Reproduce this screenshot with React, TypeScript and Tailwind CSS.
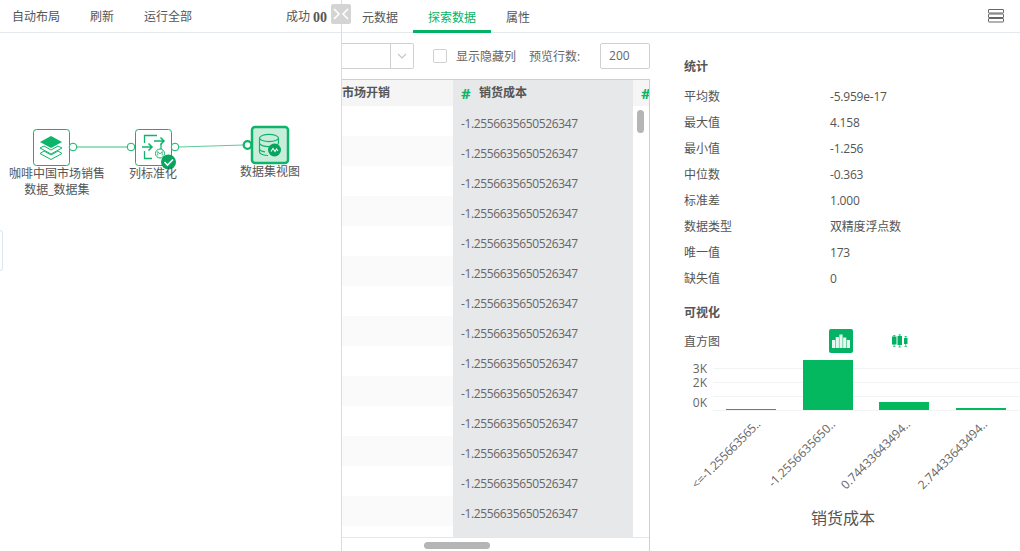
const font = { fontFamily: '"Open Sans", "Noto Sans CJK SC", sans-serif' };

const stats = [
  ["平均数", "-5.959e-17"],
  ["最大值", "4.158"],
  ["最小值", "-1.256"],
  ["中位数", "-0.363"],
  ["标准差", "1.000"],
  ["数据类型", "双精度浮点数"],
  ["唯一值", "173"],
  ["缺失值", "0"],
];

const rows = Array.from({ length: 14 }, (_, i) => i);

function Canvas() {
  return (
    <div className="relative flex-1">
      <svg className="absolute left-0 top-0" width="340" height="300" viewBox="0 33 340 300" fill="none">
        <path d="M77 147H127" stroke="#7bd6a9" strokeWidth="1.5" />
        <path d="M179 147L243 145" stroke="#5ecb96" strokeWidth="1.2" />

        <rect x="33.5" y="129.5" width="36" height="36" rx="3" fill="#fff" stroke="#0cb56a" />
        <path d="M51 136L62 142L51 148L40 142Z" fill="#0cb56a" />
        <path d="M44 146L40 148L51 154L62 148L58 146L51 150Z" fill="#fff" stroke="#0cb56a" strokeWidth="1" />
        <path d="M44 151L40 153.5L51 159.5L62 153.5L58 151L51 155Z" fill="#fff" stroke="#0cb56a" strokeWidth="1" />
        <circle cx="73" cy="147" r="3.8" fill="#fff" stroke="#0cb56a" />

        <circle cx="131" cy="147" r="3.8" fill="#fff" stroke="#0cb56a" />
        <rect x="135.5" y="129.5" width="36" height="36" rx="3" fill="#fff" stroke="#0cb56a" />
        <path d="M157 135.5H144.5V143M144.5 151V158.5H152" stroke="#0cb56a" strokeWidth="1.3" />
        <path d="M142 147H152M148.5 143.5L152 147L148.5 150.5" stroke="#0cb56a" strokeWidth="1.5" />
        <path d="M154 141H164M160.5 137.5L164 141L160.5 144.5" stroke="#0cb56a" strokeWidth="1.5" />
        <path d="M161 144V150" stroke="#0cb56a" strokeWidth="1.3" />
        <circle cx="160" cy="153.5" r="4.5" fill="#fff" stroke="#0cb56a" />
        <path d="M157.8 155.5V151.5L160 154L162.2 151.5V155.5" stroke="#0cb56a" strokeWidth="0.8" />
        <circle cx="175" cy="147" r="3.8" fill="#fff" stroke="#0cb56a" />
        <circle cx="168.5" cy="162" r="7.5" fill="#08a55f" />
        <path d="M164.5 162L167.5 165L173 159.5" stroke="#fff" strokeWidth="1.6" />

        <rect x="252" y="127" width="36" height="36" rx="3" fill="#c9eddb" stroke="#0cb56a" strokeWidth="2.5" />
        <ellipse cx="269" cy="138" rx="9.5" ry="3.6" stroke="#0cb56a" strokeWidth="1.2" />
        <path d="M259.5 138V152C259.5 154 264 155.5 268 155.5M259.5 143C259.5 145 264 146.7 269 146.7C274 146.7 278.5 145 278.5 143M259.5 148.5C259.5 150 262 151.5 265 151.8M278.5 138V143" stroke="#0cb56a" strokeWidth="1.2" />
        <circle cx="274.5" cy="150" r="6.5" fill="#08a55f" />
        <path d="M271 151.5L273 148.5L275 151.5L276.5 149L278 151" stroke="#fff" strokeWidth="1.1" />
        <circle cx="247.5" cy="145" r="3.8" fill="#fff" stroke="#0cb56a" strokeWidth="2.2" />
      </svg>

      <div className="absolute left-[7px] top-[133px] w-[100px] text-center text-[12px] leading-[16px] text-[#555]">
        咖啡中国市场销售
        <br />
        数据_数据集
      </div>
      <div className="absolute left-[123px] top-[133px] w-[60px] text-center text-[12px] leading-[16px] text-[#555]">
        列标准化
      </div>
      <div className="absolute left-[235px] top-[131px] w-[70px] text-center text-[12px] leading-[16px] text-[#555]">
        数据集视图
      </div>
      <div className="absolute left-0 top-[197px] h-[41px] w-[3px] rounded-r-[3px] border border-l-0 border-[#dfe6ec]" />
    </div>
  );
}

function LeftPane() {
  return (
    <div className="flex w-[342px] shrink-0 flex-col border-r border-[#dcdcdc]">
      <div className="flex h-[33px] items-center border-b border-[#e4e9ee] pl-3 pt-[2px] text-[12px] text-[#555]">
        <span>自动布局</span>
        <span className="ml-[30px]">刷新</span>
        <span className="ml-[30px]">运行全部</span>
        <span className="ml-[94px]">成功</span>
        <span className="ml-[3px] font-['Liberation_Serif',serif] text-[14px] font-bold">00</span>
      </div>
      <Canvas />
    </div>
  );
}

function Toolbar() {
  return (
    <div className="flex h-[46px] items-start pt-[10px] text-[12px] text-[#666]">
      <div className="flex h-[26px] w-[72px] rounded-r-[2px] border border-l-0 border-[#d0d0d0]">
        <div className="w-[49px] border-r border-[#d0d0d0]" />
        <div className="flex flex-1 items-center justify-center">
          <svg width="10" height="6" viewBox="0 0 10 6" fill="none">
            <path d="M1 1L5 5L9 1" stroke="#c4c4c4" strokeWidth="1.1" />
          </svg>
        </div>
      </div>
      <div className="ml-[19px] mt-[6px] h-[14px] w-[14px] rounded-[2px] border border-[#d0d0d0]" />
      <span className="ml-[9px] mt-[5px] leading-[18px]">显示隐藏列</span>
      <span className="ml-[13px] mt-[5px] w-[54px] leading-[18px]">预览行数:</span>
      <div className="ml-[17px] flex h-[26px] w-[50px] items-center rounded-[2px] border border-[#d0d0d0] pl-[8px]">
        200
      </div>
    </div>
  );
}

function DataTable() {
  return (
    <div className="flex h-[472px] flex-col border-r border-[#cfcfcf]">
      <div className="flex h-[458px] overflow-hidden border-t border-[#cfcfcf]">
        <div className="w-[111px] shrink-0">
          <div className="flex h-[26px] items-center bg-[#f5f5f5] text-[12px] font-bold text-[#555]">市场开销</div>
          {rows.map((i) => (
            <div key={i} className={i % 2 === 1 ? "h-[30px] bg-[#fafafa]" : "h-[30px] bg-white"} />
          ))}
        </div>
        <div className="w-[180px] shrink-0 bg-[#e7e8ea]">
          <div className="flex h-[26px] items-center pl-2 text-[12px] font-bold text-[#555]">
            <span className="w-[18px] text-[15px] text-[#0cb56a]">#</span>
            <span>销货成本</span>
          </div>
          {rows.map((i) => (
            <div key={i} className="flex h-[30px] items-center pl-2 pt-[6px] text-[12px] tracking-[-0.37px] text-[#666]">
              -1.2556635650526347
            </div>
          ))}
        </div>
        <div className="relative flex-1 overflow-hidden">
          <div className="flex h-[26px] items-center bg-[#f5f5f5] pl-2 text-[15px] font-bold text-[#0cb56a]">#</div>
          <div className="absolute left-[4px] top-[30px] h-[23px] w-[7px] rounded-full bg-[#b5b5b5]" />
        </div>
      </div>
      <div className="flex h-[14px] items-end border-t border-[#e6e6e6] pb-[2px] pl-[82px]">
        <div className="h-[7px] w-[66px] rounded-full bg-[#b5b5b5]" />
      </div>
    </div>
  );
}

function Tabs() {
  return (
    <div className="flex h-[33px] items-start border-b border-[#e4e9ee] pl-[20px] text-[12px] text-[#555]">
      <span className="mt-[9px]">元数据</span>
      <span className="ml-[15px] h-[33px] w-[78px] border-b-[3px] border-[#03b264] pt-[9px] text-center text-[#03b264]">
        探索数据
      </span>
      <span className="ml-[15px] mt-[9px]">属性</span>
      <svg className="ml-auto mr-[16px] mt-[9px]" width="16" height="14" viewBox="0 0 16 14" fill="none" stroke="#666">
        <rect x="0.5" y="0.5" width="15" height="3.5" rx="0.5" />
        <rect x="0.5" y="5" width="15" height="3.5" rx="0.5" />
        <rect x="0.5" y="9.5" width="15" height="3.5" rx="0.5" />
      </svg>
    </div>
  );
}

function Histogram() {
  const bars = [
    [726, 409],
    [803, 360],
    [879, 402],
    [956, 408],
  ];
  const labels = [
    [761, "<=-1.255663565..", -0.3],
    [836, "-1.2556635650..", 0],
    [911, "0.74433643494..", 0],
    [988, "2.74433643494..", 0],
  ] as const;
  const font12 = { fontFamily: font.fontFamily, fontSize: 12 };
  return (
    <svg width="370" height="198" viewBox="650 353 370 198" className="block">
      {[368, 382, 396, 410].map((y) => (
        <line key={y} x1="713" x2="1020" y1={y + 0.5} y2={y + 0.5} stroke="#f2f3f5" />
      ))}
      {bars.map(([x, y]) => (
        <rect key={x} x={x} y={y} width="50" height={410 - y} fill="#03b85f" />
      ))}
      <g style={font12} fill="#666" textAnchor="end">
        <text x="707" y="373">3K</text>
        <text x="707" y="387">2K</text>
        <text x="707" y="407">0K</text>
        {labels.map(([x, text, spacing]) => (
          <text key={x} x={x} y="425" letterSpacing={spacing} transform={`rotate(-45 ${x} 425)`}>
            {text}
          </text>
        ))}
      </g>
      <text x="843" y="524" textAnchor="middle" fill="#555" style={{ fontFamily: font.fontFamily, fontSize: 16 }}>
        销货成本
      </text>
    </svg>
  );
}

function StatsPanel() {
  return (
    <div className="flex-1 text-[12px] text-[#555]">
      <div className="pl-[34px] pt-[25px]">
        <div className="mb-[8px] h-[18px] font-bold leading-[18px]">统计</div>
        {stats.map(([label, value]) => (
          <div key={label} className="flex h-[26px] items-center">
            <span className="w-[146px] shrink-0">{label}</span>
            <span className="tracking-[-0.2px]">{value}</span>
          </div>
        ))}
        <div className="mt-[12px] h-[18px] font-bold leading-[18px]">可视化</div>
        <div className="mt-[7px] flex h-[24px] items-center">
          <span className="w-[145px] shrink-0 pt-[2px]">直方图</span>
          <div className="flex h-[24px] w-[24px] items-center justify-center rounded-[2px] bg-[#03b264]">
            <svg width="18" height="14" viewBox="0 0 18 14" fill="#e6f8ef">
              <rect x="0" y="6" width="3.2" height="8" />
              <rect x="3.7" y="3" width="3.2" height="11" />
              <rect x="7.4" y="0.5" width="3.2" height="13.5" />
              <rect x="11.1" y="3.5" width="3.2" height="10.5" />
              <rect x="14.8" y="6" width="3.2" height="8" />
            </svg>
          </div>
          <svg className="ml-[39px]" width="16" height="14" viewBox="0 0 16 14" fill="#03b264" stroke="#03b264">
            <rect x="0.5" y="3" width="3.5" height="7" />
            <rect x="6" y="2.5" width="3.5" height="8" />
            <rect x="12" y="4" width="3.5" height="6" stroke="none" />
            <path d="M1 1.5H3.5M2.2 1.5V12M1 12.5H3.5M6.5 0.8H9M7.7 0.8V13M6.5 13H9M12.5 2.5H15M13.7 2.5V12M12.5 12.5H15" strokeWidth="0.7" fill="none" />
          </svg>
        </div>
      </div>
      <Histogram />
    </div>
  );
}

export default function App() {
  return (
    <div className="relative flex h-[551px] w-[1020px] overflow-hidden bg-white" style={font}>
      <LeftPane />
      <div className="flex flex-1 flex-col">
        <Tabs />
        <div className="flex flex-1">
          <div className="w-[308px] shrink-0">
            <Toolbar />
            <DataTable />
          </div>
          <StatsPanel />
        </div>
      </div>
      <div className="absolute left-[331px] top-[4px] flex h-[20px] w-[20px] items-center justify-center rounded-[2px] bg-[#d4d4d4]">
        <svg width="18" height="12" viewBox="0 0 18 12" fill="none" stroke="#fff" strokeWidth="1.6">
          <path d="M2 1L7 6L2 11M16 1L11 6L16 11" />
        </svg>
      </div>
    </div>
  );
}
